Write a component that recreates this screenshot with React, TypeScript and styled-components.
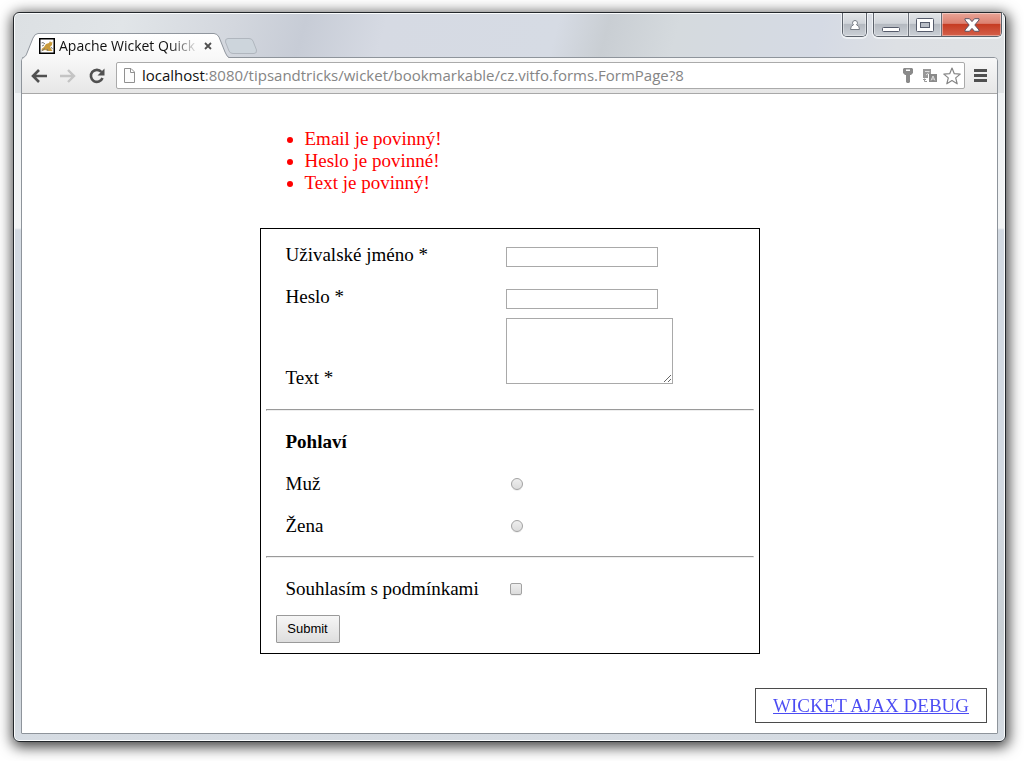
import React from "react";
import styled, { createGlobalStyle, css } from "styled-components";

const Global = createGlobalStyle`
  * { box-sizing: border-box; }
  body { margin: 0; background: #fff; }
`;

const uiFont = `"Open Sans", "Noto Sans", sans-serif`;
const pageFont = `"Liberation Serif", "Times New Roman", serif`;

const Desktop = styled.div`
  display: flex;
  min-height: 100vh;
  padding: 12px 18px 19px 13px;
  background: #fff;
`;

const BrowserWindow = styled.div`
  flex: 1;
  min-width: 0;
  display: flex;
  flex-direction: column;
  padding: 0 7px 7px;
  border: 1px solid #23272b;
  border-radius: 6px;
  background:
    linear-gradient(105deg, #dce0e3 0%, #e1e5e8 11%, #d3d7de 22%, #c7ccd6 29%, #d6dae3 37%, #d6dbe4 54%, #c9ced3 59%, #d5dade 66%, #d5dae4 80%, #dde0e4 88%, #dfe2e4 100%) top / 100% 80px no-repeat,
    linear-gradient(#eef1f3 0, #f2f4f5 215px, #d3dae2 217px, #d3dae2 65%, #c9d0d5 85%, #d6dce3 100%);
  box-shadow: inset 0 0 0 1px #fafcfd, 1px 3px 14px 2px rgba(0, 0, 0, 0.75);
`;

const TitleBar = styled.header`
  display: flex;
  justify-content: space-between;
  height: 44px;
`;

const Tabs = styled.div`
  display: flex;
  align-items: flex-end;
`;

const Tab = styled.div`
  position: relative;
  z-index: 1;
  display: flex;
  align-items: center;
  width: 208px;
  height: 25px;
  margin-bottom: -1px;
  padding: 0 13px 0 18px;
`;

const TabShape = styled.svg`
  position: absolute;
  inset: 0;
`;

const TabTitle = styled.span`
  position: relative;
  flex: 1;
  min-width: 0;
  margin-left: 4px;
  white-space: nowrap;
  font: 14px/20px ${uiFont};
  color: #111;
  mask-image: linear-gradient(to right, #000 110px, transparent 140px);
`;

const bareButton = css`
  display: flex;
  align-items: center;
  justify-content: center;
  padding: 0;
  border: 0;
  background: none;
`;

const TabClose = styled.button`
  ${bareButton}
  position: relative;
  width: 16px;
  height: 20px;
`;

const Favicon = styled.svg`
  position: relative;
`;

const NewTab = styled.button`
  ${bareButton}
  margin: 0 0 2px -5px;
`;

const WindowControls = styled.div`
  display: flex;
  height: 25px;
  margin-right: -4px;
`;

const glass = `linear-gradient(#e3e6e9 0, #d0d4d9 45%, #b4b9c0 50%, #cbd0d6 100%)`;

const ControlGroup = styled.div`
  display: flex;
  height: 24px;
  margin-left: 6px;
  overflow: hidden;
  border: 1px solid #5c626b;
  border-top: 0;
  border-radius: 0 0 5px 5px;
  box-shadow: 0 1px 0 1px #eef1f4;
`;

const Control = styled.button<{ $width: number; $danger?: boolean }>`
  ${bareButton}
  width: ${(p) => p.$width}px;
  background: ${(p) =>
    p.$danger ? "linear-gradient(#e9a597 0, #dc8070 45%, #c63c23 50%, #d4604a 100%)" : glass};
  box-shadow: inset 0 0 0 1px rgba(255, 255, 255, 0.4);
  & + & { border-left: 1px solid #6a6f78; }
`;

const Client = styled.div`
  flex: 1;
  display: flex;
  flex-direction: column;
  border: 1px solid #8e949b;
  border-radius: 4px 4px 1px 1px;
  background: #fff;
`;

const Toolbar = styled.nav`
  display: flex;
  align-items: center;
  height: 36px;
  padding: 0 8px;
  border-bottom: 1px solid #a8a8a8;
  border-radius: 3px 3px 0 0;
  background: linear-gradient(#f8f8f8, #e6e6e6);
`;

const NavButton = styled.button`
  ${bareButton}
  width: 18px;
  height: 24px;
  margin-right: 11px;
`;

const MenuButton = styled(NavButton)`
  margin: 0;
`;

const AddressBar = styled.div`
  flex: 1;
  min-width: 0;
  display: flex;
  align-items: center;
  height: 27px;
  margin: 0 6px 0 -1px;
  padding: 0 3px 0 6px;
  border: 1px solid #aaa;
  border-radius: 2px;
  background: #fff;
`;

const Address = styled.div`
  flex: 1;
  min-width: 0;
  margin-left: 6px;
  padding-bottom: 2px;
  overflow: hidden;
  white-space: nowrap;
  font: 15px/22px ${uiFont};
  color: #858585;
`;

const Host = styled.span`
  color: #111;
`;

const AddressAction = styled.button`
  ${bareButton}
  width: 18px;
  height: 22px;
  margin-left: 4px;
`;

const Page = styled.main`
  flex: 1;
  display: flex;
  flex-direction: column;
  font: 19px/22px ${pageFont};
  color: #000;
`;

const Errors = styled.ul`
  width: 500px;
  max-width: 100%;
  margin: 34px auto;
  padding-left: 45px;
  color: #f00;
`;

const Form = styled.form`
  width: 500px;
  max-width: 100%;
  margin: 0 auto 34px;
  padding: 5px;
  border: 1px solid #000;
`;

const Row = styled.div<{ $tall?: boolean }>`
  display: grid;
  grid-template-columns: 220px 1fr;
  grid-template-rows: ${(p) => (p.$tall ? "auto" : "22px")};
  align-items: ${(p) => (p.$tall ? "end" : "baseline")};
  justify-items: start;
  padding: ${(p) => (p.$tall ? "0 0 11px 20px" : "10px 0 10px 20px")};
`;

const Divider = styled.hr`
  margin: 9px 0 10px;
  border: 1px inset #eee;
`;

const TextBox = styled.input`
  width: 152px;
  height: 20px;
  padding: 1px;
  border: 1px solid #a9a9a9;
  font: 13px "Liberation Sans", sans-serif;
`;

const TextArea = styled.textarea`
  display: block;
  width: 167px;
  height: 66px;
  margin: 0 0 5px;
  border: 1px solid #a9a9a9;
  font: 13px "Liberation Mono", monospace;
`;

const Tick = styled.input`
  appearance: none;
  width: 12px;
  height: 12px;
  margin: 0 0 2px ${(p) => (p.type === "radio" ? 5 : 4)}px;
  border: 1px solid #a2a2a2;
  border-radius: ${(p) => (p.type === "radio" ? "50%" : "2px")};
  background: linear-gradient(#eee, #dcdcdc);
  box-shadow: 0 1px 0 #f0f0f0;
  &:checked { background: #666; }
`;

const Submit = styled.button`
  display: block;
  width: 64px;
  height: 28px;
  margin: 5px 10px;
  padding: 0 0 2px;
  border: 1px solid #9a9a9a;
  border-radius: 1px;
  background: linear-gradient(#f6f6f6, #dedede);
  font: 13px "Liberation Sans", Arial, sans-serif;
  color: #000;
`;

const DebugLink = styled.a`
  align-self: flex-end;
  margin: auto 10px 10px;
  padding: 6px 17px 5px;
  border: 1px solid #000;
  color: #00e;
  opacity: 0.7;
`;

const errors = ["Email je povinný!", "Heslo je povinné!", "Text je povinný!"];

export default function App() {
  return (
    <Desktop>
      <Global />
      <BrowserWindow>
        <TitleBar>
          <Tabs>
            <Tab>
              <TabShape width="208" height="25" viewBox="0 0 208 25">
                <defs>
                  <linearGradient id="tabFill" x1="0" y1="0" x2="0" y2="1">
                    <stop offset="0" stopColor="#fff" />
                    <stop offset="1" stopColor="#f8f8f8" />
                  </linearGradient>
                </defs>
                <path d="M1 25C4 24 5 23 6 20L12 5Q14 .5 17 .5H193Q196 .5 198 4L204 19Q206 24 208 25Z" fill="url(#tabFill)" />
                <path d="M1 25C4 24 5 23 6 20L12 5Q14 .5 17 .5H193Q196 .5 198 4L204 19Q206 24 208 24.5" fill="none" stroke="#90969e" />
              </TabShape>
              <Favicon width="16" height="16" viewBox="0 0 16 16">
                <rect x=".75" y=".75" width="14.5" height="14.5" fill="#fff" stroke="#000" strokeWidth="1.5" />
                <path d="M7 6L10 5L11 3L12 4.500L13.500 3.500L13 7L11 9L13.500 13H9L6 12L3 13L2.500 11L5 9Z" fill="#c99b3b" />
                <path d="M2.500 5L4 4.500L6 6M3 8L5 7M2.500 13L6 10.500M9 13L8 11M12 9L13.500 11" fill="none" stroke="#777" />
              </Favicon>
              <TabTitle>Apache Wicket Quick</TabTitle>
              <TabClose aria-label="Close tab">
                <svg width="8" height="8" viewBox="0 0 8 8"><path d="M1 1l6 6M7 1L1 7" stroke="#505050" strokeWidth="1.8" /></svg>
              </TabClose>
            </Tab>
            <NewTab aria-label="New tab">
              <svg width="34" height="18" viewBox="0 0 34 18">
                <path d="M4 1.500H25Q28 1.500 29 4L32.500 13Q33 16.500 30 16.500H9Q6 16.500 5 14L1.500 5Q1 1.500 4 1.500Z" fill="#cdd5dc" stroke="#b0b6be" />
              </svg>
            </NewTab>
          </Tabs>
          <WindowControls>
            <ControlGroup>
              <Control $width={23} aria-label="User">
                <svg width="12" height="12" viewBox="0 0 12 12">
                  <path d="M6 1.500a2.400 2.400 0 0 1 1.500 4.300Q10.500 6.500 10.500 10.500H1.500Q1.500 6.500 4.500 5.800A2.400 2.400 0 0 1 6 1.500Z" fill="#fff" stroke="#777c84" />
                </svg>
              </Control>
            </ControlGroup>
            <ControlGroup>
              <Control $width={34} aria-label="Minimize">
                <svg width="18" height="14" viewBox="0 0 18 14"><rect x=".5" y="9.500" width="17" height="4" rx="1" fill="#fff" stroke="#555b6b" /></svg>
              </Control>
              <Control $width={33} aria-label="Maximize">
                <svg width="18" height="14" viewBox="0 0 18 14">
                  <rect x=".5" y=".5" width="17" height="13" rx="1" fill="#fff" stroke="#555b6b" />
                  <rect x="4.500" y="4.500" width="9" height="5" fill="#b9bec6" stroke="#555b6b" />
                </svg>
              </Control>
              <Control $width={60} $danger aria-label="Close">
                <svg width="16" height="14" viewBox="0 0 16 14">
                  <path d="M1 .700H5.500L8 3.600L10.500 .700H15V2L10.800 7L15 12V13.300H10.500L8 10.400L5.500 13.300H1V12L5.200 7L1 2Z" fill="#fff" stroke="#5d5464" />
                </svg>
              </Control>
            </ControlGroup>
          </WindowControls>
        </TitleBar>
        <Client>
          <Toolbar>
            <NavButton aria-label="Back">
              <svg width="16" height="14" viewBox="0 0 16 14"><path d="M8 1L2 7l6 6M2 7h14" fill="none" stroke="#505050" strokeWidth="2.600" /></svg>
            </NavButton>
            <NavButton aria-label="Forward">
              <svg width="16" height="14" viewBox="0 0 16 14"><path d="M8 1l6 6-6 6M14 7H0" fill="none" stroke="#c4c4c4" strokeWidth="2.400" /></svg>
            </NavButton>
            <NavButton aria-label="Reload">
              <svg width="16" height="16" viewBox="0 0 16 16">
                <path d="M12.500 4A6 6 0 1 0 13.500 10" fill="none" stroke="#505050" strokeWidth="2.600" />
                <path d="M15.500 .5V7.500H8.500Z" fill="#505050" />
              </svg>
            </NavButton>
            <AddressBar>
              <svg width="13" height="16" viewBox="0 0 13 16">
                <path d="M1.500 .5H8L11.500 4V14.500H1.500ZM7.500 .5V4.500H11.500" fill="#fcfcfc" stroke="#909090" />
              </svg>
              <Address><Host>localhost</Host>:8080/tipsandtricks/wicket/bookmarkable/cz.vitfo.forms.FormPage?8</Address>
              <AddressAction aria-label="Passwords">
                <svg width="10" height="15" viewBox="0 0 10 15">
                  <path fillRule="evenodd" d="M1 0H9L10 1V5L8 7H7V14L6 15H4L3 14V7H2L0 5V1ZM3 1.500V3H7V1.500Z" fill="#8a8a8a" />
                </svg>
              </AddressAction>
              <AddressAction aria-label="Translate">
                <svg width="14" height="14" viewBox="0 0 14 14">
                  <path d="M0 0H8V5H5V9H0Z" fill="#999" />
                  <path d="M2 2.500H6.500M3 6L5.500 4" stroke="#ddd" fill="none" />
                  <rect x="6" y="5" width="8" height="8" fill="#8a8a8a" />
                  <path d="M8 11.500L10 7L12 11.500M9 10H11" stroke="#ddd" fill="none" />
                  <path d="M0 10.500H3M1.500 9.500V12.500H4" stroke="#999" fill="none" />
                </svg>
              </AddressAction>
              <AddressAction aria-label="Bookmark">
                <svg width="18" height="18" viewBox="0 0 18 18">
                  <path d="M9 1L11.300 6.700L17.200 7.100L12.700 10.900L14.200 16.800L9 13.600L3.800 16.800L5.300 10.900L.800 7.100L6.700 6.700Z" fill="#fff" stroke="#858585" strokeWidth="1.200" strokeLinejoin="round" />
                </svg>
              </AddressAction>
            </AddressBar>
            <MenuButton aria-label="Menu">
              <svg width="13" height="13" viewBox="0 0 13 13"><path d="M0 1.500H13M0 6.500H13M0 11.500H13" stroke="#505050" strokeWidth="3" /></svg>
            </MenuButton>
          </Toolbar>
          <Page>
            <Errors>
              {errors.map((text) => <li key={text}>{text}</li>)}
            </Errors>
            <Form onSubmit={(e) => e.preventDefault()}>
              <Row>
                <label htmlFor="username">Uživalské jméno *</label>
                <TextBox id="username" type="text" />
              </Row>
              <Row>
                <label htmlFor="password">Heslo *</label>
                <TextBox id="password" type="password" />
              </Row>
              <Row $tall>
                <label htmlFor="text">Text *</label>
                <TextArea id="text" />
              </Row>
              <Divider />
              <Row>
                <b>Pohlaví</b>
              </Row>
              <Row>
                <label htmlFor="male">Muž</label>
                <Tick id="male" type="radio" name="gender" />
              </Row>
              <Row>
                <label htmlFor="female">Žena</label>
                <Tick id="female" type="radio" name="gender" />
              </Row>
              <Divider />
              <Row>
                <label htmlFor="terms">Souhlasím s podmínkami</label>
                <Tick id="terms" type="checkbox" />
              </Row>
              <Submit type="submit">Submit</Submit>
            </Form>
            <DebugLink href="#debug">WICKET AJAX DEBUG</DebugLink>
          </Page>
        </Client>
      </BrowserWindow>
    </Desktop>
  );
}
